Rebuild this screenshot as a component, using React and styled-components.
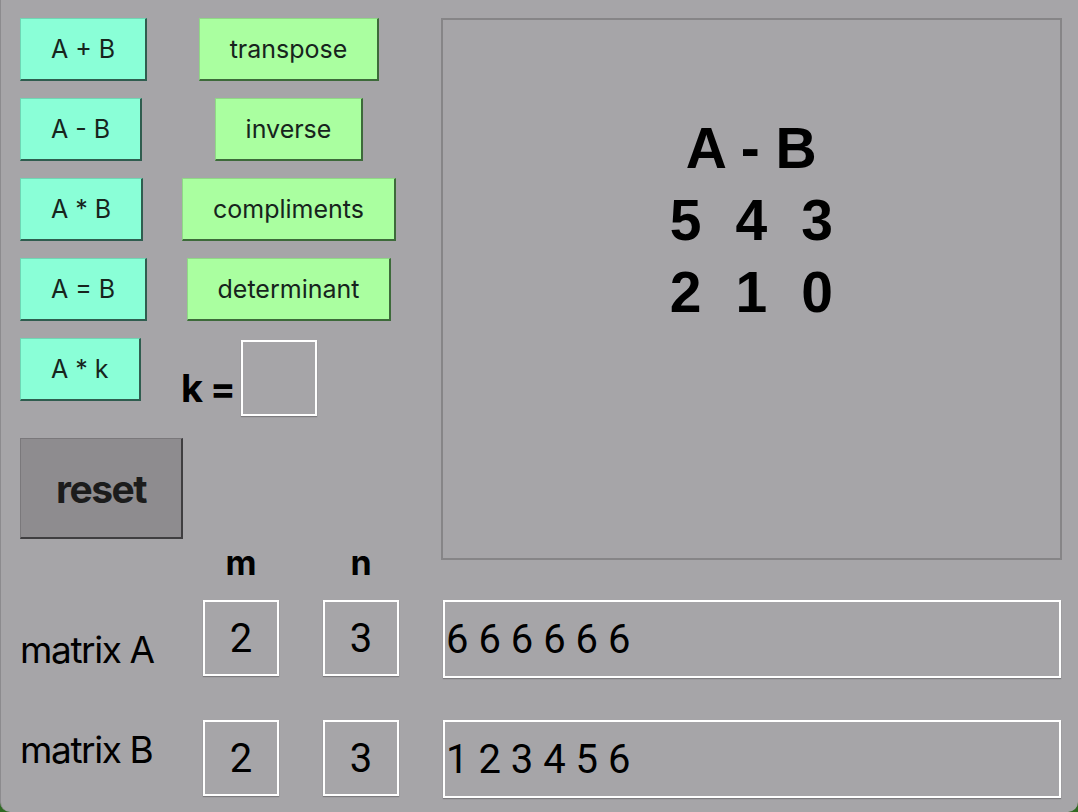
import React from "react";
import styled, { createGlobalStyle } from "styled-components";

const GlobalStyle = createGlobalStyle`
  html, body {
    margin: 0;
    padding: 0;
    background: #2f6a22;
  }
  * {
    box-sizing: border-box;
  }
`;

const Page = styled.div`
  width: 1078px;
  height: 812px;
  overflow: hidden;
  background-color: #a6a5a8;
  border-left: 1px solid #8c8b8e;
  border-radius: 0 0 10px 10px;
  padding: 18px 16px 0 19px;
  display: flex;
  flex-direction: column;
  font-family: Inter, "Liberation Sans", sans-serif;
`;

const Top = styled.div`
  display: flex;
  gap: 20px;
`;

const Controls = styled.div`
  width: 401px;
  display: flex;
  flex-direction: column;
`;

const ButtonGrid = styled.div`
  display: grid;
  grid-template-columns: 162px 214px;
  grid-template-rows: repeat(4, 63px) 78px;
  row-gap: 17px;
  align-items: start;
`;

const OpButton = styled.button`
  height: 63px;
  padding: 0 30px;
  justify-self: ${(props) => (props.$tone === "green" ? "center" : "start")};
  background-color: ${(props) => (props.$tone === "green" ? "#aaffa0" : "#8affd7")};
  border-style: solid;
  border-width: 1px 2px 2px 1px;
  border-color: ${(props) =>
    props.$tone === "green"
      ? "#8fd886 #3d6a3a #3d6a3a #8fd886"
      : "#6fd6b4 #2f5d4f #2f5d4f #6fd6b4"};
  font-family: Inter, "Liberation Sans", sans-serif;
  font-size: 25px;
  color: #17241d;
  white-space: nowrap;
  cursor: pointer;
`;

const KRow = styled.div`
  display: flex;
  align-items: flex-end;
  gap: 6px;
  margin-left: -1px;
  margin-top: 2px;
  height: 76px;
`;

const KLabel = styled.span`
  font-size: 38px;
  font-weight: 700;
  color: #000;
  line-height: 1;
  padding-bottom: 9px;
  letter-spacing: -1px;
`;

const Box = styled.input`
  width: ${(props) => props.$width || "76px"};
  height: ${(props) => props.$height || "76px"};
  background: transparent;
  border: 2px solid #ffffff;
  box-shadow: 0 1px 1px rgba(0, 0, 0, 0.25);
  outline: none;
  padding: 0 1px;
  font-family: Roboto, "Liberation Sans", sans-serif;
  font-size: 40px;
  color: #000;
  text-align: ${(props) => props.$align || "center"};
`;

const ResetButton = styled.button`
  width: 163px;
  height: 101px;
  margin-top: 22px;
  background-color: #8e8c8f;
  border-style: solid;
  border-width: 1px 2px 2px 1px;
  border-color: #7a787b #3f3e40 #3f3e40 #7a787b;
  font-family: Inter, "Liberation Sans", sans-serif;
  font-size: 39px;
  font-weight: 700;
  letter-spacing: -1.5px;
  color: #1c1c1c;
  cursor: pointer;
`;

const DimHeader = styled.div`
  display: flex;
  gap: 44px;
  padding-left: 183px;
  margin-top: 2px;
  height: 42px;
  align-items: center;
`;

const DimLabel = styled.span`
  width: 76px;
  text-align: center;
  font-size: 34px;
  font-weight: 700;
  color: #000;
`;

const Display = styled.div`
  width: 622px;
  height: 542px;
  border: 2px solid #868587;
  padding-top: 92px;
  display: flex;
  flex-direction: column;
  align-items: center;
  font-family: "Liberation Sans", Arial, sans-serif;
  font-size: 57px;
  font-weight: 700;
  line-height: 72px;
  color: #000;
`;

const ResultRow = styled.div`
  display: flex;
  gap: 34px;
`;

const Bottom = styled.div`
  display: flex;
  margin-top: 17px;
`;

const LabelCol = styled.div`
  width: 183px;
  display: flex;
  flex-direction: column;
  gap: 64px;
  padding-top: 32px;
`;

const MatrixLabel = styled.span`
  font-size: 37px;
  line-height: 36px;
  letter-spacing: -1.4px;
  color: #000;
`;

const InputCol = styled.div`
  display: flex;
  flex-direction: column;
  gap: 42px;
`;

const InputRow = styled.div`
  display: flex;
  align-items: flex-start;
  gap: 44px;
`;

const ops = [
  ["A + B", "transpose"],
  ["A - B", "inverse"],
  ["A * B", "compliments"],
  ["A = B", "determinant"],
];

const result = [
  [5, 4, 3],
  [2, 1, 0],
];

const matrices = [
  { name: "matrix A", m: "2", n: "3", values: "6 6 6 6 6 6" },
  { name: "matrix B", m: "2", n: "3", values: "1 2 3 4 5 6" },
];

export default function App() {
  return (
    <>
      <GlobalStyle />
      <Page>
        <Top>
          <Controls>
            <ButtonGrid>
              {ops.map(([left, right]) => (
                <React.Fragment key={left}>
                  <OpButton>{left}</OpButton>
                  <OpButton $tone="green">{right}</OpButton>
                </React.Fragment>
              ))}
              <OpButton>A * k</OpButton>
              <KRow>
                <KLabel>k =</KLabel>
                <Box defaultValue="" />
              </KRow>
            </ButtonGrid>
            <ResetButton>reset</ResetButton>
            <DimHeader>
              <DimLabel>m</DimLabel>
              <DimLabel>n</DimLabel>
            </DimHeader>
          </Controls>
          <Display>
            <div>A - B</div>
            {result.map((row, i) => (
              <ResultRow key={i}>
                {row.map((v, j) => (
                  <span key={j}>{v}</span>
                ))}
              </ResultRow>
            ))}
          </Display>
        </Top>
        <Bottom>
          <LabelCol>
            {matrices.map((mx) => (
              <MatrixLabel key={mx.name}>{mx.name}</MatrixLabel>
            ))}
          </LabelCol>
          <InputCol>
            {matrices.map((mx) => (
              <InputRow key={mx.name}>
                <Box defaultValue={mx.m} />
                <Box defaultValue={mx.n} />
                <Box
                  defaultValue={mx.values}
                  $width="618px"
                  $height="78px"
                  $align="left"
                />
              </InputRow>
            ))}
          </InputCol>
        </Bottom>
      </Page>
    </>
  );
}
